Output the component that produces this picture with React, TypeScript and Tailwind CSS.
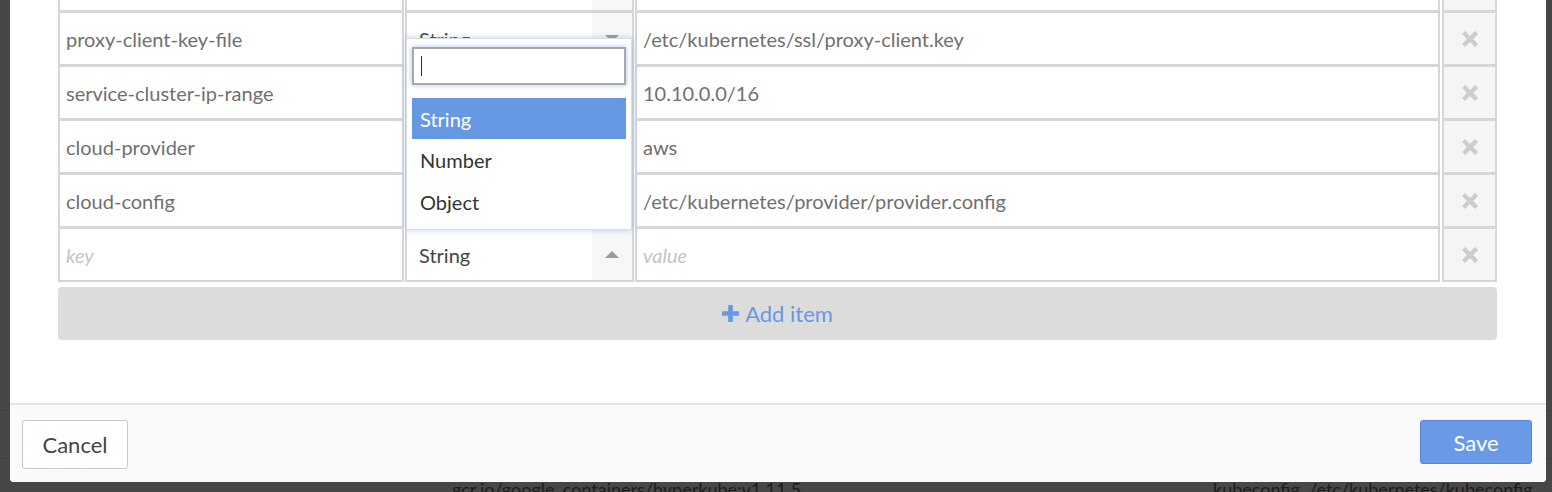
import React from "react";

type Row = { k: string; v: string; placeholder?: boolean; open?: boolean };

const rows: Row[] = [
  { k: "proxy-client-cert-file", v: "/etc/kubernetes/ssl/proxy-client.pem" },
  { k: "proxy-client-key-file", v: "/etc/kubernetes/ssl/proxy-client.key" },
  { k: "service-cluster-ip-range", v: "10.10.0.0/16" },
  { k: "cloud-provider", v: "aws" },
  { k: "cloud-config", v: "/etc/kubernetes/provider/provider.config" },
  { k: "key", v: "value", placeholder: true, open: true },
];

function XIcon() {
  return (
    <svg width="20" height="20" viewBox="0 0 20 20">
      <path d="M3.5 3.5 L16.5 16.5 M16.5 3.5 L3.5 16.5" stroke="#cdcdcd" strokeWidth="4.4" />
    </svg>
  );
}

function Tri({ up }: { up?: boolean }) {
  return (
    <svg width="14" height="7" viewBox="0 0 14 7">
      {up ? <path d="M0 7 L7 0 L14 7 Z" fill="#9a9a9a" /> : <path d="M0 0 L14 0 L7 7 Z" fill="#9a9a9a" />}
    </svg>
  );
}

function PlusIcon() {
  return (
    <svg width="17" height="17" viewBox="0 0 17 17">
      <path d="M6.2 0 H10.8 V6.2 H17 V10.8 H10.8 V17 H6.2 V10.8 H0 V6.2 H6.2 Z" fill="#6798e6" />
    </svg>
  );
}

function Dropdown() {
  return (
    <div className="absolute left-[-1px] bottom-[50px] w-[226px] h-[192px] bg-white border border-[#dcdcdc] shadow-[0_0_6px_rgba(102,152,228,0.45)] px-[5px] pt-[8px] flex flex-col z-10">
      <div className="h-[38px] border-2 border-[#a8a8a8] shadow-[0_0_5px_rgba(102,152,228,0.6)] flex items-center pl-[7px]">
        <span className="w-px h-[20px] bg-[#333]" />
      </div>
      <div className="mt-[13px] flex flex-col text-[20px] text-[#333]">
        <div className="h-[41px] bg-[#6798e4] text-white flex items-center pl-[8px]">String</div>
        <div className="h-[42px] flex items-center pl-[8px]">Number</div>
        <div className="h-[42px] flex items-center pl-[8px]">Object</div>
      </div>
    </div>
  );
}

function KVRow({ r, first }: { r: Row; first: boolean }) {
  return (
    <div className={`flex h-[55px] ${first ? "" : "-mt-px"}`}>
      <div
        className={`w-[346px] border-2 border-[#d6d6d6] bg-white flex items-center pl-[6px] text-[20px] ${
          r.placeholder ? "italic text-[#c4c4c4]" : "text-[#707070]"
        }`}
      >
        {r.k}
      </div>
      <div className="relative w-[229px] ml-px border-2 border-[#d6d6d6] bg-white flex">
        <div className="flex-1 flex items-center pl-[12px] text-[20px] text-[#454545]">String</div>
        <div className="w-[40px] bg-[#f7f7f7] flex items-center justify-center">
          <Tri up={r.open} />
        </div>
        {r.open && <Dropdown />}
      </div>
      <div
        className={`w-[805px] ml-px border-2 border-[#d6d6d6] bg-white flex items-center pl-[6px] text-[20px] ${
          r.placeholder ? "italic text-[#c4c4c4]" : "text-[#707070]"
        }`}
      >
        {r.v}
      </div>
      <div className="w-[55px] ml-[2px] border-2 border-[#d6d6d6] bg-[#f5f5f5] flex items-center justify-center">
        <XIcon />
      </div>
    </div>
  );
}

export default function App() {
  return (
    <div className="relative w-[1552px] h-[492px] overflow-hidden bg-[#474747] font-['Lato',sans-serif]">
      {/* page behind the modal */}
      <div className="absolute inset-0 flex flex-col">
        <div className="h-[410px] shrink-0" />
        <div className="h-[48px] shrink-0 border-t border-[#3f3f3f]" />
        <div className="shrink-0 border-t border-[#3f3f3f] pt-[18px] flex text-[18px] leading-[24px] text-[#1c1c1c]">
          <span className="w-[1213px] pl-[452px] shrink-0">gcr.io/google_containers/hyperkube:v1.11.5</span>
          <span className="shrink-0">kubeconfig&nbsp;&nbsp;/etc/kubernetes/kubeconfig</span>
        </div>
      </div>

      {/* modal */}
      <div className="absolute left-[10px] bottom-[10px] w-[1536px] bg-white rounded-b-[4px] flex flex-col">
        <div className="pl-[48px] pb-[63px] flex flex-col">
          {rows.map((r, i) => (
            <KVRow key={i} r={r} first={i === 0} />
          ))}
          <div className="mt-[5px] h-[53px] w-[1439px] rounded-[4px] bg-[#dcdcdc] flex items-center justify-center gap-[6px] text-[22px] text-[#6798e6]">
            <PlusIcon />
            <span>Add item</span>
          </div>
        </div>
        <div className="h-[79px] border-t-2 border-[#e6e6e6] bg-[#fafafa] rounded-b-[4px] pl-[12px] pr-[14px] pt-[15px] flex justify-between items-start">
          <button className="w-[106px] h-[49px] border border-[#c8c8c8] rounded-[3px] bg-white text-[22px] text-[#444]">
            Cancel
          </button>
          <button className="w-[112px] h-[44px] border border-[#5585dc] rounded-[3px] bg-[#6a9ae6] text-[22px] text-white">
            Save
          </button>
        </div>
      </div>
    </div>
  );
}
